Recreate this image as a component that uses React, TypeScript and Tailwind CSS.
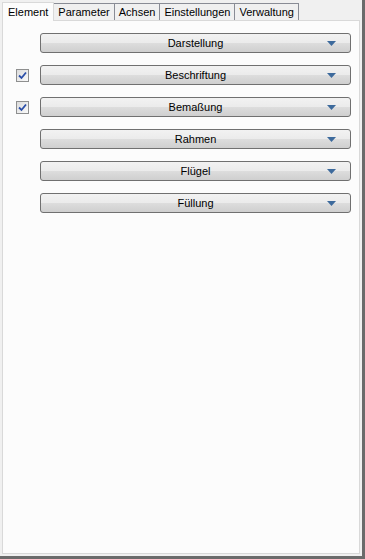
import React from "react";

const tabs = ["Element", "Parameter", "Achsen", "Einstellungen", "Verwaltung"];

type Row = { label: string; checked?: boolean };

const rows: Row[] = [
  { label: "Darstellung" },
  { label: "Beschriftung", checked: true },
  { label: "Bemaßung", checked: true },
  { label: "Rahmen" },
  { label: "Flügel" },
  { label: "Füllung" },
];

function Check() {
  return (
    <div className="w-[13px] h-[13px] border border-[#8e8f8f] bg-gradient-to-br from-[#dcdcdc] to-[#fafafa] flex items-center justify-center">
      <svg width="9" height="9" viewBox="0 0 9 9">
        <path d="M1 4.5 L3.5 7 L8 1.5" stroke="#2a4ea8" strokeWidth="1.8" fill="none" />
      </svg>
    </div>
  );
}

function Section({ row }: { row: Row }) {
  return (
    <div className="flex items-center h-[20px]">
      <div className="w-[37px] flex justify-end pr-[11px]">{row.checked ? <Check /> : null}</div>
      <button
        type="button"
        className="relative w-[311px] h-[20px] rounded-[3px] border border-[#707070] bg-[linear-gradient(to_bottom,#f2f2f2_0%,#ebebeb_50%,#dddddd_51%,#cfcfcf_100%)] text-[11px] text-black flex items-center justify-center"
      >
        {row.label}
        <svg className="absolute right-[14px] top-[7px]" width="9" height="5" viewBox="0 0 9 5">
          <path d="M0 0 H9 L4.5 5 Z" fill="#3d6a9c" />
        </svg>
      </button>
    </div>
  );
}

export default function App() {
  return (
    <div
      className="w-[365px] h-[559px] bg-[#f0f0f0] border-r-[3px] border-b-[3px] border-[#6b6b6b] flex flex-col"
      style={{ fontFamily: '"Liberation Sans", Arial, sans-serif' }}
    >
      <div className="flex items-end pl-[2px] pt-[2px] h-[20px] text-[11px]">
        {tabs.map((t, i) =>
          i === 0 ? (
            <div
              key={t}
              className="h-[19px] px-[5px] bg-[#fcfcfc] border-t border-l border-r border-[#d9d9d9] relative z-10 -mb-px flex items-center"
            >
              {t}
            </div>
          ) : (
            <div
              key={t}
              className="h-[17px] px-[4px] bg-[#f0f0f0] border-t border-r border-[#898c95] border-l-0 flex items-center"
            >
              {t}
            </div>
          )
        )}
      </div>
      <div className="flex-1 mx-[2px] mb-[2px] border border-[#d9d9d9] bg-[#fcfcfc] pt-[12px] flex flex-col gap-[12px]">
        {rows.map((r) => (
          <Section key={r.label} row={r} />
        ))}
      </div>
    </div>
  );
}
